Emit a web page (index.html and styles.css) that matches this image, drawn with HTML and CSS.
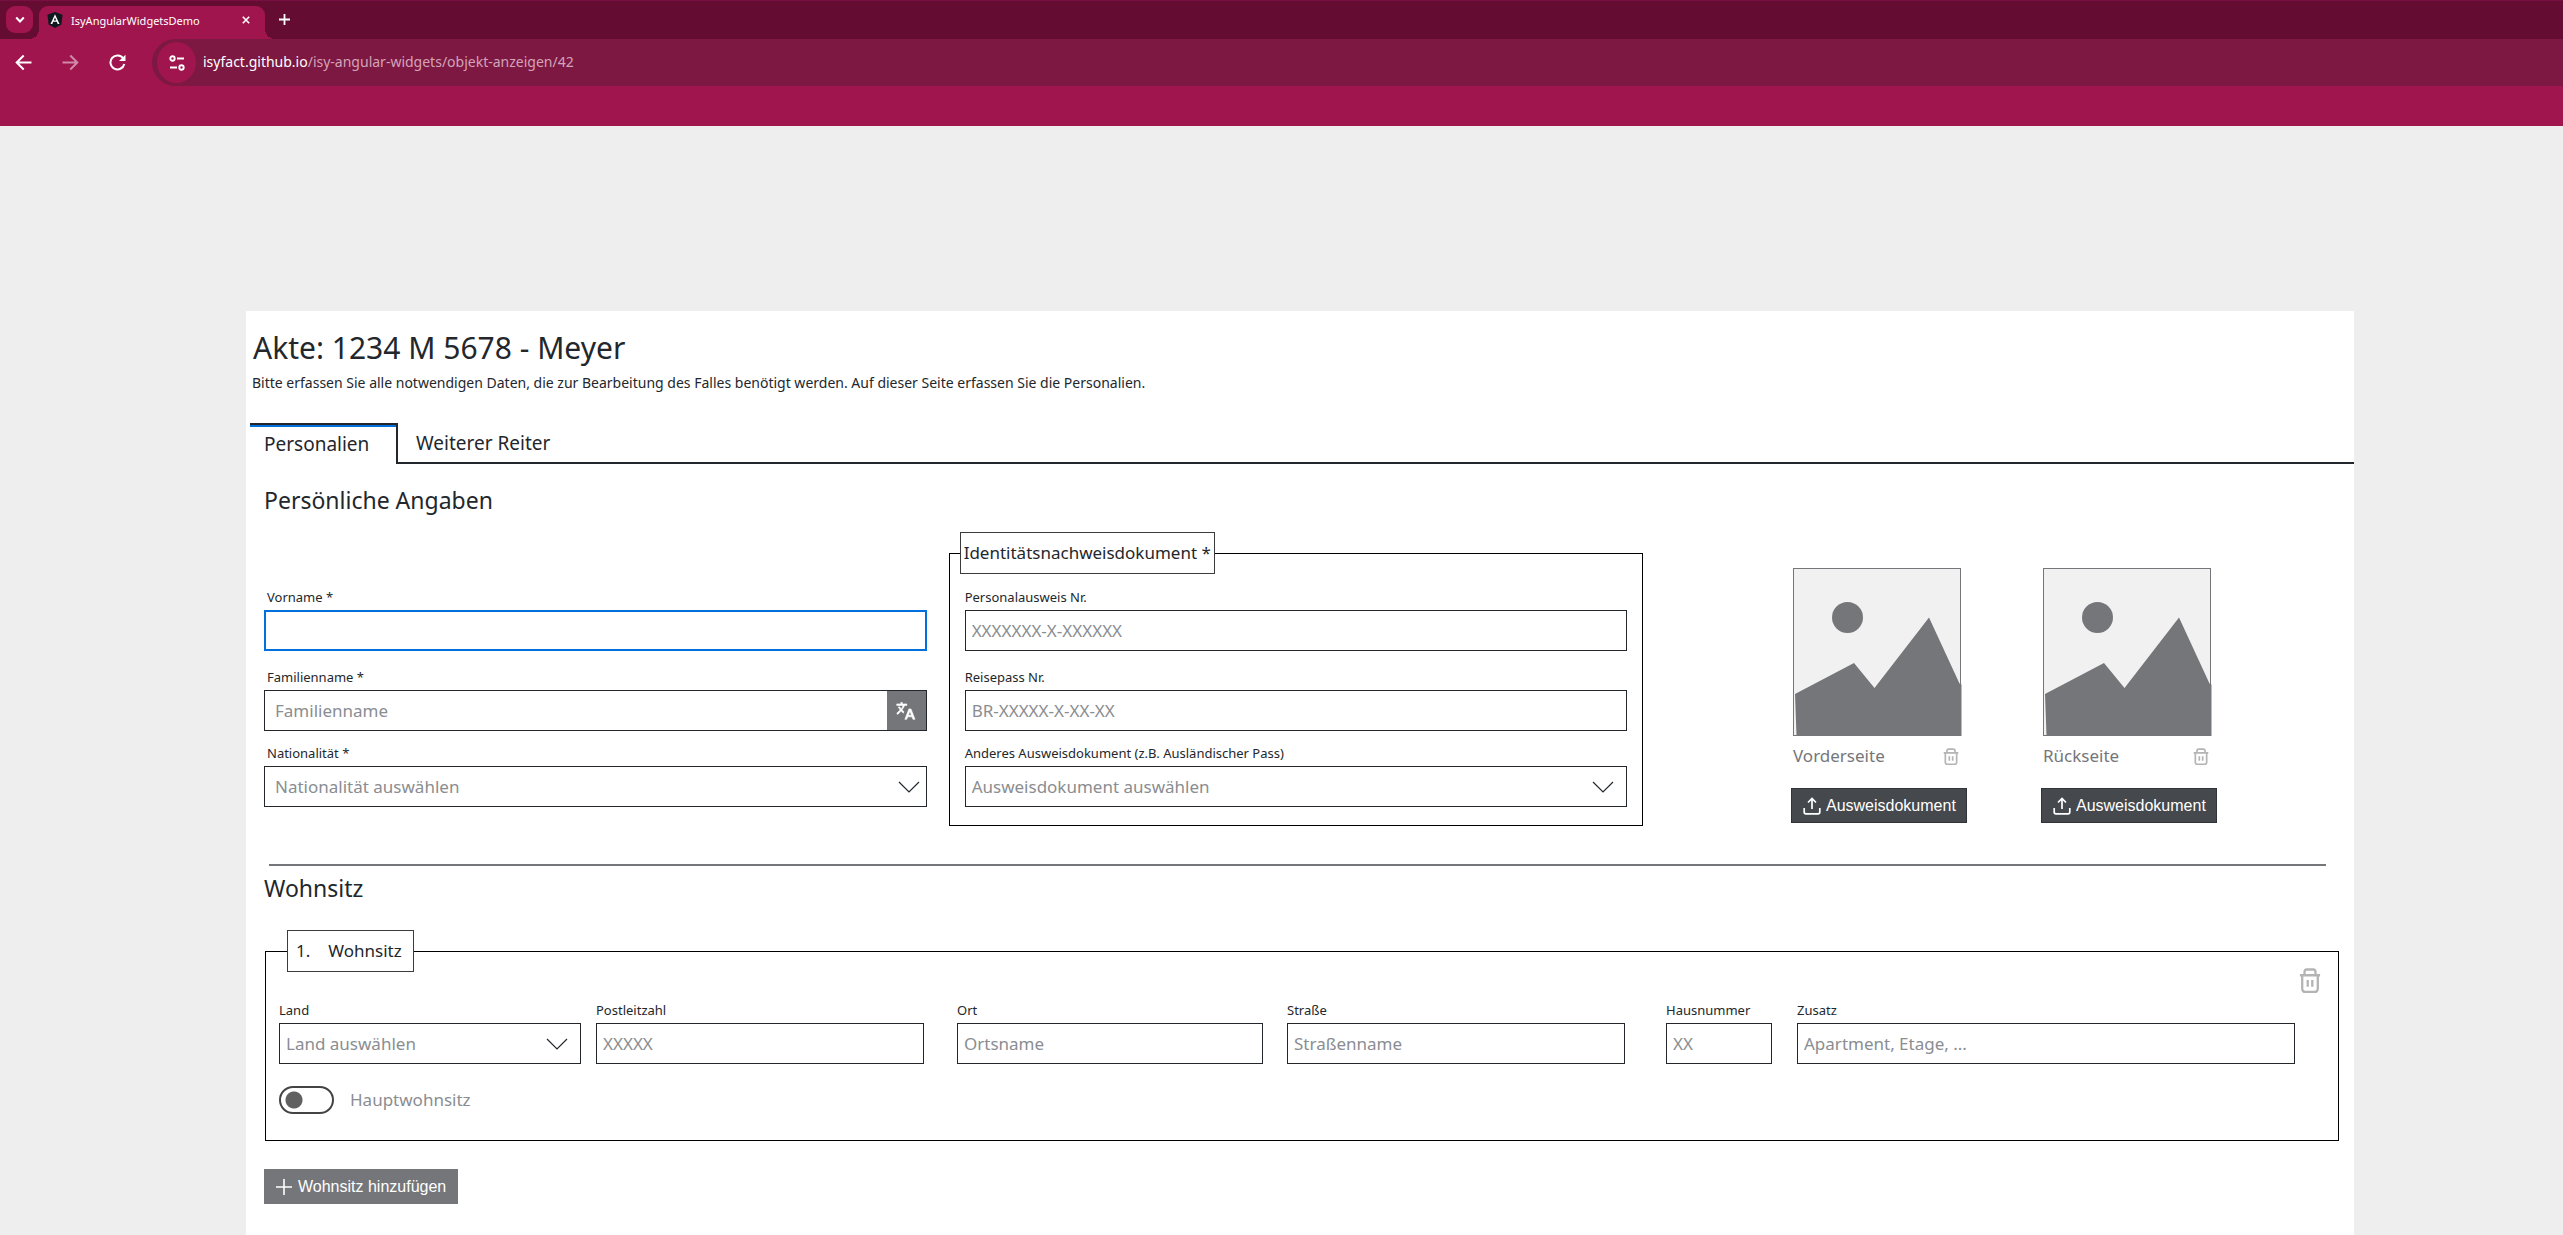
FILE: index.html
```html
<!DOCTYPE html>
<html lang="de">
<head>
<meta charset="utf-8">
<title>IsyAngularWidgetsDemo</title>
<link rel="stylesheet" href="styles.css">
</head>
<body>
<svg class="sprite" aria-hidden="true">
  <symbol id="trash" viewBox="0 0 24 24" preserveAspectRatio="none">
    <path d="M1 7h22M6 7V4q0-2.500 2.500-2.500h7q2.500 0 2.500 2.500v3M3.500 7v13q0 3 3 3h11q3 0 3-3V7M9.500 11.500v6.500M14.500 11.500v6.500" fill="none" stroke="currentColor" stroke-width="2.500" stroke-linejoin="round"/>
  </symbol>
  <symbol id="chevron" viewBox="0 0 22 12">
    <path d="M1 1l10 10L21 1" fill="none" stroke="currentColor" stroke-width="1.200"/>
  </symbol>
  <symbol id="upload" viewBox="0 0 18 18">
    <path d="M9 12V2M5 5.500L9 1.500l4 4M1.200 11v4q0 1.800 1.800 1.800h12q1.800 0 1.800-1.800v-4" fill="none" stroke="currentColor" stroke-width="1.700"/>
  </symbol>
  <symbol id="photo" viewBox="0 0 170 170">
    <rect x=".5" y=".5" width="167" height="167" fill="#f1f1f1" stroke="#75767a"/>
    <circle cx="54.500" cy="49.500" r="15.500" fill="#75767a"/>
    <path d="M2 126L61 95l20.500 25L136 49.500l30.500 66 2 1V168H3.500z" fill="#75767a"/>
  </symbol>
</svg>

<header class="browser">
  <div class="tabstrip">
    <button class="tab-search" aria-label="Tabs durchsuchen">
      <svg width="10" height="8" viewBox="0 0 10 8"><path d="M1.200 1.500L5 5.500l3.800-4" fill="none" stroke="#fff" stroke-width="2"/></svg>
    </button>
    <div class="browser-tab">
      <svg width="16" height="16" viewBox="0 0 16 16"><path d="M8 0l7.600 2.700-1.200 9.700L8 16l-6.400-3.600L.4 2.700z" fill="#101820"/><path d="M8 2.200L3.500 12h1.800l.9-2.200h3.600l.9 2.200h1.800zm0 3.300l1.200 2.900H6.800z" fill="#fff"/></svg>
      <span class="tab-title">IsyAngularWidgetsDemo</span>
      <button class="icon-button" aria-label="Tab schließen">
        <svg width="8" height="8" viewBox="0 0 10 10"><path d="M1 1l8 8M9 1L1 9" stroke="#fff" stroke-width="2"/></svg>
      </button>
    </div>
    <button class="icon-button new-tab" aria-label="Neuer Tab">
      <svg width="11" height="11" viewBox="0 0 11 11"><path d="M5.500 0v11M0 5.500h11" stroke="#fff" stroke-width="1.800"/></svg>
    </button>
  </div>
  <div class="toolbar">
    <nav class="nav-buttons">
      <button class="icon-button" aria-label="Zurück">
        <svg width="17" height="17" viewBox="0 0 17 17"><path d="M16.500 8.500H2M8.700 1.500l-7 7 7 7" fill="none" stroke="#fff" stroke-width="2"/></svg>
      </button>
      <button class="icon-button faded" aria-label="Vorwärts">
        <svg width="17" height="17" viewBox="0 0 17 17"><path d="M.5 8.500H15M8.300 1.500l7 7-7 7" fill="none" stroke="#fff" stroke-width="2"/></svg>
      </button>
      <button class="icon-button" aria-label="Neu laden">
        <svg width="17" height="17" viewBox="0 0 17 17"><path d="M14.300 4.500A7 7 0 1 0 15.300 10" fill="none" stroke="#fff" stroke-width="2"/><path d="M16.500.8V7H10z" fill="#fff"/></svg>
      </button>
    </nav>
    <div class="address">
      <button class="site-info" aria-label="Website-Informationen">
        <svg width="16" height="16" viewBox="0 0 16 16" fill="none" stroke="#fff" stroke-width="1.900"><circle cx="3.500" cy="3.500" r="2.200"/><path d="M8 3.500h7M1 12.500h7"/><circle cx="12.500" cy="12.500" r="2.200"/></svg>
      </button>
      <span class="url"><span class="host">isyfact.github.io</span>/isy-angular-widgets/objekt-anzeigen/42</span>
    </div>
  </div>
</header>

<main class="page">
  <h1>Akte: 1234 M 5678 - Meyer</h1>
  <p class="intro">Bitte erfassen Sie alle notwendigen Daten, die zur Bearbeitung des Falles benötigt werden. Auf dieser Seite erfassen Sie die Personalien.</p>

  <div class="tabs" role="tablist">
    <button class="tab active" role="tab" aria-selected="true">Personalien</button>
    <button class="tab" role="tab" aria-selected="false">Weiterer Reiter</button>
  </div>

  <section class="section">
    <h2>Persönliche Angaben</h2>
    <div class="personal">
      <div class="fields person-fields">
        <div class="field">
          <label for="vorname">Vorname *</label>
          <input class="control focused" id="vorname" type="text">
        </div>
        <div class="field">
          <label for="familienname">Familienname *</label>
          <div class="input-group">
            <input class="control" id="familienname" type="text" placeholder="Familienname">
            <button class="translate" aria-label="Sonderzeichen">
              <svg width="20" height="20" viewBox="0 0 24 24" fill="currentColor"><path d="M9.500 12.800L7.200 10.600C8.700 9 9.700 7.200 10.300 5.300H13V3.500H7.600V1.800H5.800v1.700H.9v1.800h7.500C8 7 7.200 8.300 6.200 9.500 5.500 8.700 5 8 4.600 7.100H2.700c.6 1.300 1.400 2.500 2.300 3.600L.8 14.800l1.400 1.300 4-4 2.600 2.500zM15.500 9.500L10.600 22h2.300l1.100-3h5.200l1.100 3h2.500L18 9.500zm-.6 7.600l1.800-4.900 1.800 4.900z" stroke="currentColor" stroke-width=".7"/></svg>
            </button>
          </div>
        </div>
        <div class="field compact">
          <label for="nation">Nationalität *</label>
          <div class="select">
            <select class="control" id="nation"><option>Nationalität auswählen</option></select>
            <svg class="chevron" width="22" height="12"><use href="#chevron"/></svg>
          </div>
        </div>
      </div>

      <fieldset class="box">
        <legend>Identitätsnachweisdokument *</legend>
        <div class="fields">
          <div class="field">
            <label for="ausweis">Personalausweis Nr.</label>
            <input class="control" id="ausweis" type="text" placeholder="XXXXXXX-X-XXXXXX">
          </div>
          <div class="field">
            <label for="pass">Reisepass Nr.</label>
            <input class="control" id="pass" type="text" placeholder="BR-XXXXX-X-XX-XX">
          </div>
          <div class="field compact">
            <label for="anderes">Anderes Ausweisdokument (z.B. Ausländischer Pass)</label>
            <div class="select">
              <select class="control" id="anderes"><option>Ausweisdokument auswählen</option></select>
              <svg class="chevron" width="22" height="12"><use href="#chevron"/></svg>
            </div>
          </div>
        </div>
      </fieldset>

      <div class="documents">
        <div class="document">
          <svg class="photo" role="img" aria-label="Vorderseite"><use href="#photo"/></svg>
          <div class="caption">
            <span>Vorderseite</span>
            <button class="icon-button trash" aria-label="Vorderseite löschen"><svg width="16" height="17"><use href="#trash"/></svg></button>
          </div>
          <button class="button dark"><svg width="18" height="18"><use href="#upload"/></svg>Ausweisdokument</button>
        </div>
        <div class="document">
          <svg class="photo" role="img" aria-label="Rückseite"><use href="#photo"/></svg>
          <div class="caption">
            <span>Rückseite</span>
            <button class="icon-button trash" aria-label="Rückseite löschen"><svg width="16" height="17"><use href="#trash"/></svg></button>
          </div>
          <button class="button dark"><svg width="18" height="18"><use href="#upload"/></svg>Ausweisdokument</button>
        </div>
      </div>
    </div>
  </section>

  <hr>

  <section class="section residence">
    <h2>Wohnsitz</h2>
    <fieldset class="box address-box">
      <legend><span>1.</span><span>Wohnsitz</span></legend>
      <div class="box-actions">
        <button class="icon-button trash" aria-label="Wohnsitz löschen"><svg width="22" height="25"><use href="#trash"/></svg></button>
      </div>
      <div class="address-grid">
        <div class="field">
          <label for="land">Land</label>
          <div class="select">
            <select class="control" id="land"><option>Land auswählen</option></select>
            <svg class="chevron" width="22" height="12"><use href="#chevron"/></svg>
          </div>
        </div>
        <div class="field"><label for="plz">Postleitzahl</label><input class="control" id="plz" type="text" placeholder="XXXXX"></div>
        <div class="field"><label for="ort">Ort</label><input class="control" id="ort" type="text" placeholder="Ortsname"></div>
        <div class="field"><label for="strasse">Straße</label><input class="control" id="strasse" type="text" placeholder="Straßenname"></div>
        <div class="field"><label for="hausnr">Hausnummer</label><input class="control" id="hausnr" type="text" placeholder="XX"></div>
        <div class="field"><label for="zusatz">Zusatz</label><input class="control" id="zusatz" type="text" placeholder="Apartment, Etage, ..."></div>
      </div>
      <label class="switch"><input type="checkbox" role="switch"><span>Hauptwohnsitz</span></label>
    </fieldset>
    <button class="button grey"><svg width="18" height="18" viewBox="0 0 18 18"><path d="M9 1v16M1 9h16" stroke="#fff" stroke-width="1.600"/></svg>Wohnsitz hinzufügen</button>
  </section>
</main>
</body>
</html>
```
FILE: styles.css
```css
:root {
  --brand: #a1154e;
  --brand-dark: #650c32;
  --ink: #23272c;
  --grey: #75767a;
  --muted: #8a8d91;
  --focus: #0071dc;
}

* {
  box-sizing: border-box;
}

body {
  margin: 0;
  min-height: 100vh;
  display: flex;
  flex-direction: column;
  background: #eee;
  color: var(--ink);
  font-family: "Noto Sans", "Open Sans", sans-serif;
}

button {
  font: inherit;
  color: inherit;
  background: none;
  border: 0;
  padding: 0;
}

svg {
  display: block;
  flex: none;
}

.sprite {
  width: 0;
  height: 0;
  position: absolute;
}

/* Browser frame */

.browser {
  background: var(--brand);
  color: #fff;
  padding-bottom: 40px;
}

.icon-button {
  display: flex;
  align-items: center;
  justify-content: center;
}

.tabstrip {
  display: flex;
  align-items: flex-start;
  height: 39px;
  padding: 5px 6px 0;
  background: var(--brand-dark);
  border-top: 1px solid #771040;
}

.tab-search {
  display: grid;
  place-items: center;
  width: 27px;
  height: 27px;
  margin-right: 6px;
  border-radius: 9px;
  background: var(--brand);
}

.browser-tab {
  position: relative;
  display: flex;
  align-items: center;
  gap: 8px;
  width: 226px;
  height: 33px;
  padding: 0 15px 5px 8px;
  border-radius: 9px 9px 0 0;
  background: var(--brand);
}

.browser-tab::before,
.browser-tab::after {
  content: "";
  position: absolute;
  bottom: 0;
  width: 10px;
  height: 10px;
}

.browser-tab::before {
  right: 100%;
  background: radial-gradient(circle at 0 0, transparent 10px, var(--brand) 10px);
}

.browser-tab::after {
  left: 100%;
  background: radial-gradient(circle at 100% 0, transparent 10px, var(--brand) 10px);
}

.tab-title {
  flex: 1;
  font-size: 11px;
  white-space: nowrap;
}

.new-tab {
  width: 27px;
  height: 27px;
  margin-left: 6px;
}

.toolbar {
  display: flex;
  height: 47px;
}

.nav-buttons {
  display: flex;
  align-items: center;
  gap: 30px;
  width: 152px;
  padding-left: 15px;
}

.faded {
  opacity: .5;
}

.address {
  flex: 1;
  display: flex;
  align-items: center;
  gap: 7px;
  padding-left: 5px;
  border-radius: 24px 0 0 24px;
  background: #7c1842;
}

.site-info {
  display: grid;
  place-items: center;
  width: 39px;
  height: 41px;
  border-radius: 50%;
  background: var(--brand);
}

.url {
  font-size: 14px;
  line-height: 20px;
  padding-bottom: 2px;
  color: #d5a3b8;
}

.host {
  color: #fff;
}

/* Page */

.page {
  flex: 1;
  margin: 185px 209px 0 246px;
  padding: 17px 0 31px;
  background: #fff;
}

h1,
h2,
p {
  margin: 0;
  font-weight: 400;
}

h1 {
  padding-left: 7px;
  font-size: 30px;
  line-height: 40px;
}

.intro {
  padding: 5px 0 0 6px;
  font-size: 14px;
  line-height: 20px;
}

.tabs {
  display: flex;
  margin: 30px 0 0 4px;
}

.tabs::after {
  content: "";
  flex: 1;
  border-bottom: 2px solid var(--ink);
}

.tab {
  height: 41px;
  padding: 0 18px;
  border-bottom: 2px solid var(--ink);
  font-size: 19px;
  line-height: 40px;
}

.tab.active {
  width: 148px;
  padding: 0 14px;
  text-align: left;
  border-top: 2px solid var(--ink);
  border-right: 2px solid var(--ink);
  border-bottom: 0;
  box-shadow: inset 0 2px var(--focus);
  line-height: 39px;
}

.section {
  padding: 20px 15px 0 18px;
}

h2 {
  font-size: 23px;
  line-height: 32px;
}

.personal {
  display: grid;
  grid-template-columns: 663fr 695fr 562fr;
  column-gap: 22px;
  margin-top: 16px;
  padding-right: 112px;
}

.person-fields {
  padding-top: 55px;
}

.fields {
  display: flex;
  flex-direction: column;
  gap: 16px;
}

.field {
  display: flex;
  flex-direction: column;
  gap: 3px;
  min-width: 0;
}

.compact {
  margin-top: -4px;
}

.field label {
  font-size: 13px;
  line-height: 20px;
  white-space: nowrap;
}

.person-fields label {
  padding-left: 3px;
}

.control {
  width: 100%;
  height: 41px;
  padding: 0 6px;
  border: 1px solid var(--ink);
  border-radius: 0;
  background: #fff;
  color: var(--muted);
  font: 17px "Noto Sans", "Open Sans", sans-serif;
  appearance: none;
}

.control::placeholder {
  color: var(--muted);
  opacity: 1;
}

.focused {
  border: 2px solid var(--focus);
}

.person-fields .control {
  padding: 0 10px;
}

.input-group {
  display: flex;
}

.translate {
  display: grid;
  place-items: center;
  flex: none;
  width: 40px;
  border: 1px solid var(--ink);
  border-left: 0;
  background: var(--grey);
  color: #fff;
}

.input-group .control {
  border-right: 0;
}

.select {
  display: grid;
  align-items: center;
}

.select > * {
  grid-area: 1 / 1;
}

.chevron {
  justify-self: end;
  margin-right: 7px;
  pointer-events: none;
}

.box .chevron {
  margin-right: 13px;
}

.box {
  min-width: 0;
  margin: 0;
  padding: 13px 15px 18px;
  border: 1px solid #000;
}

legend {
  display: flex;
  gap: 18px;
  margin-left: -5px;
  padding: 0 3px;
  border: 1px solid #3c3c3c;
  font-size: 17px;
  line-height: 40px;
}

.documents {
  display: flex;
  justify-content: flex-end;
  gap: 74px;
  padding: 36px 10px 0 0;
}

.document {
  display: flex;
  flex-direction: column;
  align-items: flex-start;
  width: 176px;
  padding-left: 2px;
}

.photo {
  width: 170px;
  height: 170px;
}

.caption {
  display: flex;
  justify-content: space-between;
  align-items: center;
  width: 166px;
  margin: 6px 0 20px;
  color: var(--grey);
  font-size: 17px;
  line-height: 24px;
}

.trash {
  color: #b4b4b4;
}

.button {
  display: flex;
  align-items: center;
  gap: 5px;
  height: 35px;
  color: #fff;
  font: 16px "Liberation Sans", Arial, sans-serif;
  white-space: nowrap;
}

.dark {
  width: 176px;
  margin-left: -2px;
  padding: 0 11px;
  background: #45484d;
  border: 1px solid #303338;
}

.grey {
  margin-top: 28px;
  padding: 0 12px 0 11px;
  background: var(--grey);
}

hr {
  height: 2px;
  margin: 38px 28px 0 23px;
  border: 0;
  background: var(--grey);
}

.residence {
  padding-top: 6px;
}

.address-box {
  margin-top: 26px;
  padding: 0 13px 26px;
  margin-left: 1px;
}

.address-box legend {
  margin-left: 8px;
  padding: 0 11px 0 8px;
}

.box-actions {
  display: flex;
  justify-content: flex-end;
  height: 26px;
  padding-right: 4px;
  align-items: center;
  margin-top: -5px;
}

.address-grid {
  display: grid;
  grid-template-columns: 317fr 361fr 330fr 379fr 131fr 498fr;
  padding-right: 30px;
  margin-top: 7px;
}

.address-grid .field:nth-child(1) { margin-right: 15px; }
.address-grid .field:nth-child(2) { margin-right: 33px; }
.address-grid .field:nth-child(3) { margin-right: 24px; }
.address-grid .field:nth-child(4) { margin-right: 41px; }
.address-grid .field:nth-child(5) { margin-right: 25px; }

.switch {
  display: flex;
  align-items: center;
  gap: 16px;
  width: max-content;
  margin-top: 22px;
  color: var(--muted);
  font-size: 17px;
  line-height: 28px;
}

.switch input {
  appearance: none;
  width: 55px;
  height: 28px;
  margin: 0;
  border: 2px solid #444;
  border-radius: 14px;
  background: radial-gradient(circle at 13px 12px, #606060 8px, transparent 9px);
}
```
